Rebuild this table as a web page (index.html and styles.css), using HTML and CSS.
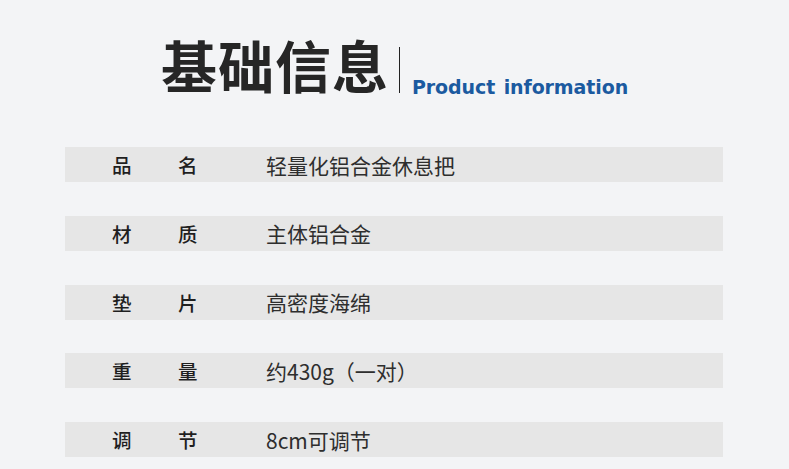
FILE: index.html
```html
<!DOCTYPE html>
<html lang="zh">
<head>
<meta charset="utf-8">
<link rel="stylesheet" href="styles.css">
</head>
<body>
<div class="page">
  <header class="head">
    <h1 class="title">基础信息</h1>
    <span class="divider"></span>
    <span class="sub">Product information</span>
  </header>
  <div class="table">
    <div class="row"><span class="label"><i>品</i><i>名</i></span><span class="value">轻量化铝合金休息把</span></div>
    <div class="row"><span class="label"><i>材</i><i>质</i></span><span class="value">主体铝合金</span></div>
    <div class="row"><span class="label"><i>垫</i><i>片</i></span><span class="value">高密度海绵</span></div>
    <div class="row"><span class="label"><i>重</i><i>量</i></span><span class="value">约430g（一对）</span></div>
    <div class="row"><span class="label"><i>调</i><i>节</i></span><span class="value">8cm可调节</span></div>
  </div>
</div>
</body>
</html>
```
FILE: styles.css
```css
html, body {
  margin: 0;
  padding: 0;
  background: #f3f4f6;
}
.page {
  width: 789px;
  height: 469px;
  overflow: hidden;
  font-family: "Noto Sans CJK SC", "Noto Sans", sans-serif;
}
.head {
  display: flex;
  align-items: flex-end;
  padding: 34px 0 0 161px;
  height: 63px;
}
.title {
  margin: 0 0 3px 0;
  font-size: 56px;
  line-height: 60px;
  font-weight: 700;
  color: #262626;
  letter-spacing: 1px;
}
.divider {
  width: 1px;
  height: 46px;
  background: #222;
  margin: 0 12px 4px 10px;
}
.sub {
  font-family: "DejaVu Sans", sans-serif;
  font-weight: 700;
  font-size: 19px;
  line-height: 22px;
  color: #1b5aa0;
  word-spacing: 2px;
  letter-spacing: -0.1px;
  margin-bottom: -1px;
}
.table {
  margin: 50px 0 0 65px;
  width: 658px;
  display: flex;
  flex-direction: column;
  gap: 33.75px;
}
.row {
  height: 35px;
  background: #e6e6e6;
  display: flex;
  align-items: center;
}
.label {
  display: flex;
  gap: 46px;
  margin-left: 47px;
  width: 154px;
  font-size: 19.5px;
  font-weight: 500;
  color: #1f1f1f;
}
.label i {
  font-style: normal;
  width: 20px;
}
.value {
  font-size: 21px;
  font-weight: 400;
  color: #2e2e2e;
}
```
